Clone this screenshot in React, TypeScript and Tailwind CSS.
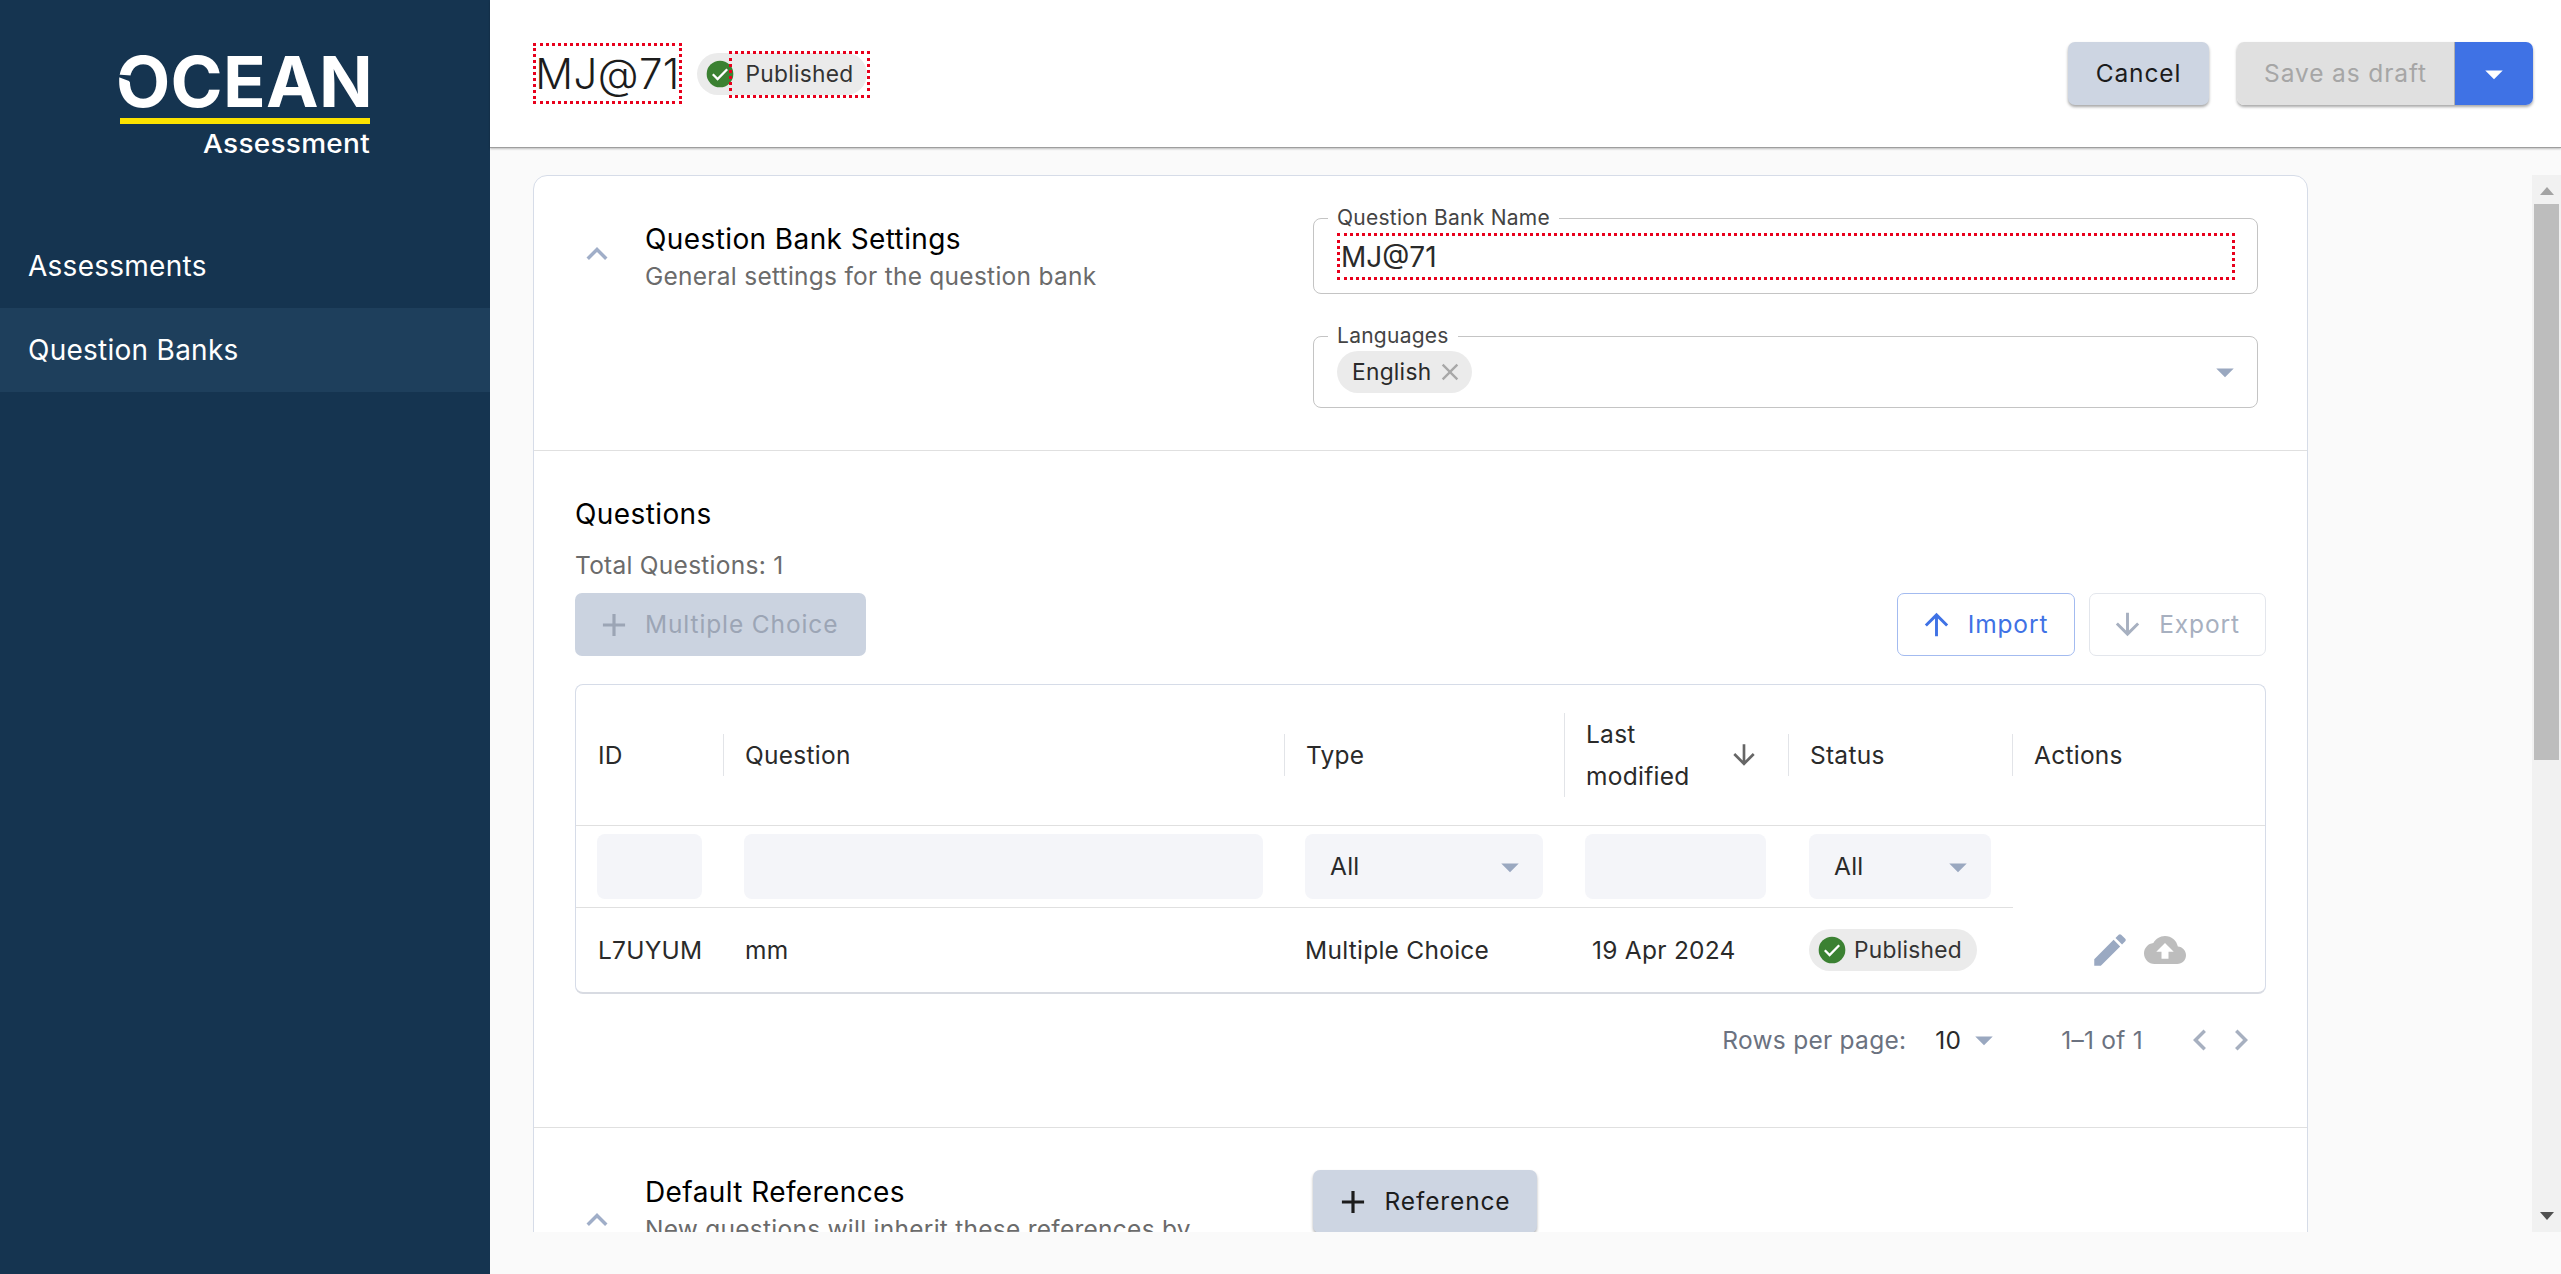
import React from "react";

const P = {
  edit: "M3 17.25V21h3.75L17.81 9.94l-3.75-3.75L3 17.25zM20.71 7.04c.39-.39.39-1.02 0-1.41l-2.34-2.34a.9959.9959 0 0 0-1.41 0l-1.83 1.83 3.75 3.75 1.83-1.83z",
  cloud: "M19.35 10.04C18.67 6.59 15.64 4 12 4 9.11 4 6.6 5.64 5.35 8.04 2.34 8.36 0 10.91 0 14c0 3.31 2.69 6 6 6h13c2.76 0 5-2.24 5-5 0-2.64-2.05-4.78-4.65-4.96zM14 13v4h-4v-4H7l5-5 5 5h-3z",
  less: "M12 8l-6 6 1.41 1.41L12 10.83l4.59 4.58L18 14z",
  up: "M4 12l1.41 1.41L11 7.83V20h2V7.83l5.58 5.59L20 12l-8-8-8 8z",
  down: "M20 12l-1.41-1.41L13 16.17V4h-2v12.17l-5.58-5.59L4 12l8 8 8-8z",
  add: "M19 13h-6v6h-2v-6H5v-2h6V5h2v6h6v2z",
  drop: "M7 10l5 5 5-5z",
  close: "M19 6.41L17.59 5 12 10.59 6.41 5 5 6.41 10.59 12 5 17.59 6.41 19 12 13.41 17.59 19 19 17.59 13.41 12z",
  left: "M15.41 7.41L14 6l-6 6 6 6 1.41-1.41L10.83 12z",
  right: "M10 6L8.59 7.41 13.17 12l-4.58 4.59L10 18l6-6z",
};

function Icon({ d, className }: { d: string; className: string }) {
  return (
    <svg viewBox="0 0 24 24" className={className} fill="currentColor">
      <path d={d} />
    </svg>
  );
}

function Check({ className }: { className: string }) {
  return (
    <svg viewBox="0 0 24 24" className={className}>
      <circle cx="12" cy="12" r="10" fill="#3b8132" />
      <path d="M6.6 12.2l3.6 3.6 7.2-7.4" fill="none" stroke="#fff" strokeWidth="1.7" />
    </svg>
  );
}

function Logo() {
  return (
    <svg width="264" height="130" viewBox="-6 -24 264 130" className="block">
      <text x="-3" y="50" fontFamily="Inter" fontWeight="700" fontSize="70" textLength="257" lengthAdjust="spacingAndGlyphs" fill="#fff">OCEAN</text>
      <polygon points="-2,17.5 12,18.5 14,30 10,24 -2,19.5" fill="#153450" />
      <rect x="1" y="61" width="250" height="6" fill="#fbe200" />
      <text x="84" y="96" fontFamily="Inter" fontWeight="500" fontSize="26" textLength="167" lengthAdjust="spacingAndGlyphs" fill="#fff">Assessment</text>
    </svg>
  );
}

function ColHead({ label, sep = true, pad = "pl-[21px]" }: { label: string; sep?: boolean; pad?: string }) {
  return (
    <div className={`relative flex h-full items-center ${pad}`}>
      {sep && <span className="absolute right-0 h-[42px] w-px bg-[#e2e4e8]" />}
      <span>{label}</span>
    </div>
  );
}

function FilterBox({ className, label }: { className: string; label?: string }) {
  return (
    <div className={`flex h-[65px] items-center justify-between rounded-[8px] bg-[#f4f5f9] ${className}`}>
      {label && (
        <>
          <span className="pl-[25px]">{label}</span>
          <Icon d={P.drop} className="mr-[12px] h-[42px] w-[42px] text-[#9aa8c0]" />
        </>
      )}
    </div>
  );
}

export default function App() {
  return (
    <div className="flex h-[1274px] w-[2561px] overflow-hidden font-['Inter',sans-serif] text-[24.5px] tracking-[0.26px] text-[#2a2a2a]">
      <aside className="flex w-[490px] shrink-0 flex-col bg-[#153450] text-[28px] text-white">
        <div className="ml-[113px] mt-[33px] h-[191px]">
          <Logo />
        </div>
        <div className="flex h-[84px] items-center pl-[28px]">Assessments</div>
        <div className="flex h-[84px] items-center bg-[#1e3f5c] pl-[28px]">Question Banks</div>
      </aside>

      <main className="flex min-w-0 flex-1 flex-col bg-[#fafafa]">
        <header className="flex h-[148px] shrink-0 items-center justify-between border-b border-[#9e9e9e] bg-white pl-[43px] pr-[28px] shadow-[0_1px_2px_rgba(0,0,0,0.25)]">
          <div className="flex items-center">
            <div className="flex h-[61px] w-[149px] items-center justify-center border-[3px] border-dotted border-[#e8001c] text-[42px] font-light leading-none tracking-[0.4px] text-[#1c1c1c]">MJ@71</div>
            <div className="relative ml-[15px] mt-[1px] flex h-[42px] w-[170px] items-center rounded-full bg-[#ebebeb]">
              <Check className="ml-[7px] h-[32px] w-[32px]" />
              <span className="absolute left-[32px] top-[-2px] flex h-[47px] w-[141px] items-center justify-center border-[3px] border-dotted border-[#e8001c] text-[22.75px] text-[#333]">Published</span>
            </div>
          </div>
          <div className="flex items-center">
            <button className="h-[63px] w-[141px] rounded-[7px] bg-[#cdd5e2] tracking-[0.875px] text-[#1c1c1c] shadow-[0_2px_3px_rgba(0,0,0,0.35)]">Cancel</button>
            <div className="ml-[28px] flex h-[63px] rounded-[7px] shadow-[0_2px_3px_rgba(0,0,0,0.35)]">
              <button className="w-[218px] rounded-l-[7px] border-r border-[#b0b0b0] bg-[#e0e0e0] tracking-[0.875px] text-[#a6a6a6]">Save as draft</button>
              <button className="flex w-[78px] items-center justify-center rounded-r-[7px] bg-[#3f72e5] text-white">
                <Icon d={P.drop} className="h-[42px] w-[42px]" />
              </button>
            </div>
          </div>
        </header>

        <div className="flex h-[1084px] shrink-0 overflow-hidden pt-[27px]">
          <div className="ml-[43px] h-[1200px] w-[1775px] rounded-[14px] border border-[#d6dce8] bg-white">
            {/* Settings */}
            <section className="flex h-[275px] border-b border-[#e0e0e0]">
              <Icon d={P.less} className="ml-[42px] mt-[57px] h-[42px] w-[42px] shrink-0 text-[#a0aec8]" />
              <div className="ml-[27px] mt-[44px] w-[668px]">
                <div className="text-[28px] font-normal leading-[38px] tracking-[0.4px] text-black">Question Bank Settings</div>
                <div className="leading-[37px] text-[#6b6b6b]">General settings for the question bank</div>
              </div>
              <div className="mt-[42px] w-[945px]">
                <div className="relative h-[76px] rounded-[8px] border border-[#c4c4c4]">
                  <span className="absolute left-[14px] top-[-13px] bg-white px-[9px] text-[21px] leading-[24px] text-[#444]">Question Bank Name</span>
                  <div className="ml-[23px] mt-[14px] flex h-[47px] w-[898px] items-center border-[3px] border-dotted border-[#e8001c] pl-[1px] text-[28px] tracking-normal">MJ@71</div>
                </div>
                <div className="relative mt-[42px] flex h-[72px] items-center justify-between rounded-[8px] border border-[#c4c4c4]">
                  <span className="absolute left-[14px] top-[-13px] bg-white px-[9px] text-[21px] leading-[24px] text-[#444]">Languages</span>
                  <div className="ml-[23px] flex h-[42px] w-[135px] items-center justify-between rounded-full bg-[#ebebeb] pl-[15px] pr-[8px] text-[22.75px]">
                    <span>English</span>
                    <Icon d={P.close} className="h-[28px] w-[28px] text-[#a8a8a8]" />
                  </div>
                  <Icon d={P.drop} className="mr-[11px] h-[42px] w-[42px] text-[#9aa8c0]" />
                </div>
              </div>
            </section>

            {/* Questions */}
            <section className="h-[677px] border-b border-[#e0e0e0] px-[41px]">
              <div className="pt-[44px] text-[28px] font-normal leading-[38px] tracking-[0.4px] text-black">Questions</div>
              <div className="mt-[14px] leading-[37px] text-[#6b6b6b]">Total Questions: 1</div>
              <div className="mt-[9px] flex items-center justify-between">
                <button className="flex h-[63px] w-[291px] items-center rounded-[7px] bg-[#cbd3e0] pl-[20px] tracking-[0.875px] text-[#9ca5b5]">
                  <Icon d={P.add} className="mr-[12px] h-[38px] w-[38px]" />
                  Multiple Choice
                </button>
                <div className="flex">
                  <button className="flex h-[63px] w-[178px] items-center justify-center gap-[14px] rounded-[7px] border border-[#a3bbf0] pr-[5px] tracking-[0.875px] text-[#3f72e5]">
                    <Icon d={P.up} className="h-[35px] w-[35px]" />
                    Import
                  </button>
                  <button className="ml-[14px] flex h-[63px] w-[177px] items-center justify-center gap-[14px] rounded-[7px] border border-[#e3e6ec] pr-[5px] tracking-[0.875px] text-[#a7b0c0]">
                    <Icon d={P.down} className="h-[35px] w-[35px]" />
                    Export
                  </button>
                </div>
              </div>

              <div className="mt-[28px] h-[310px] rounded-[8px] border border-b-2 border-[#d6dce8] border-b-[#d8dbe2]">
                <div className="grid h-[141px] grid-cols-[148px_561px_280px_224px_224px_1fr] border-b border-[#e0e0e0]">
                  <ColHead label="ID" pad="pl-[22px]" />
                  <ColHead label="Question" />
                  <ColHead label="Type" />
                  <div className="relative flex h-full items-center justify-between pl-[21px] pr-[29px]">
                    <span className="absolute right-0 h-[42px] w-px bg-[#e2e4e8]" />
                    <span className="absolute left-[-1px] h-[84px] w-px bg-[#e2e4e8]" />
                    <span className="leading-[42px]">Last<br />modified</span>
                    <Icon d={P.down} className="h-[32px] w-[32px] text-[#666]" />
                  </div>
                  <ColHead label="Status" />
                  <ColHead label="Actions" sep={false} />
                </div>
                <div className="grid h-[82px] grid-cols-[148px_561px_280px_224px_224px_1fr]">
                  <div className="flex items-center border-b border-[#e0e0e0] pl-[21px]"><FilterBox className="w-[105px]" /></div>
                  <div className="flex items-center border-b border-[#e0e0e0] pl-[20px]"><FilterBox className="w-[519px]" /></div>
                  <div className="flex items-center border-b border-[#e0e0e0] pl-[20px]"><FilterBox className="w-[238px]" label="All" /></div>
                  <div className="flex items-center border-b border-[#e0e0e0] pl-[20px]"><FilterBox className="w-[181px]" /></div>
                  <div className="flex items-center border-b border-[#e0e0e0] pl-[20px]"><FilterBox className="w-[182px]" label="All" /></div>
                  <div />
                </div>
                <div className="grid h-[84px] grid-cols-[148px_561px_280px_224px_224px_1fr] items-center">
                  <div className="pl-[22px]">L7UYUM</div>
                  <div className="pl-[21px]">mm</div>
                  <div className="pl-[20px]">Multiple Choice</div>
                  <div className="pl-[27px]">19 Apr 2024</div>
                  <div className="pl-[20px]">
                    <div className="flex h-[42px] w-[168px] items-center rounded-full bg-[#ebebeb] pl-[7px] text-[22.75px] text-[#333]">
                      <Check className="mr-[6px] h-[32px] w-[32px]" />
                      Published
                    </div>
                  </div>
                  <div className="flex items-center pl-[76px]">
                    <Icon d={P.edit} className="h-[42px] w-[42px] text-[#9aa9c2]" />
                    <Icon d={P.cloud} className="ml-[13px] h-[42px] w-[42px] text-[#bdbdbd]" />
                  </div>
                </div>
              </div>

              <div className="mt-[25px] flex h-[42px] items-center justify-end pr-[4px] text-[#6b7280]">
                <span>Rows per page:</span>
                <span className="ml-[29px] text-[#2a2a2a]">10</span>
                <Icon d={P.drop} className="ml-[2px] h-[42px] w-[42px] text-[#9aa8c0]" />
                <span className="ml-[56px]">1–1 of 1</span>
                <Icon d={P.left} className="ml-[36px] h-[42px] w-[42px] text-[#a7b0c0]" />
                <Icon d={P.right} className="ml-[-1px] h-[42px] w-[42px] text-[#a7b0c0]" />
              </div>
            </section>

            {/* References */}
            <section className="flex">
              <Icon d={P.less} className="ml-[42px] mt-[71px] h-[42px] w-[42px] shrink-0 text-[#a0aec8]" />
              <div className="ml-[27px] mt-[45px] w-[668px]">
                <div className="text-[28px] font-normal leading-[38px] tracking-[0.4px] text-black">Default References</div>
                <div className="leading-[37px] text-[#6b6b6b]">New questions will inherit these references by</div>
              </div>
              <button className="mt-[42px] flex h-[63px] w-[224px] items-center justify-center gap-[12px] rounded-[7px] bg-[#cdd5e2] pr-[5px] tracking-[0.875px] text-[#1c1c1c] shadow-[0_2px_3px_rgba(0,0,0,0.3)]">
                <Icon d={P.add} className="h-[38px] w-[38px]" />
                Reference
              </button>
            </section>
          </div>

          <div className="ml-auto flex h-[1057px] w-[29px] flex-col items-center bg-[#f1f1f1]">
            <svg width="14" height="8" viewBox="0 0 14 8" className="mt-[12px] shrink-0"><path d="M7 0l7 8H0z" fill="#a3a3a3" /></svg>
            <div className="mt-[9px] h-[556px] w-[25px] shrink-0 bg-[#bdbdbd]" />
            <svg width="14" height="8" viewBox="0 0 14 8" className="mb-[12px] mt-auto shrink-0"><path d="M7 8l7-8H0z" fill="#505050" /></svg>
          </div>
        </div>
        <div className="flex-1 bg-[#fafafa]" />
      </main>
    </div>
  );
}
